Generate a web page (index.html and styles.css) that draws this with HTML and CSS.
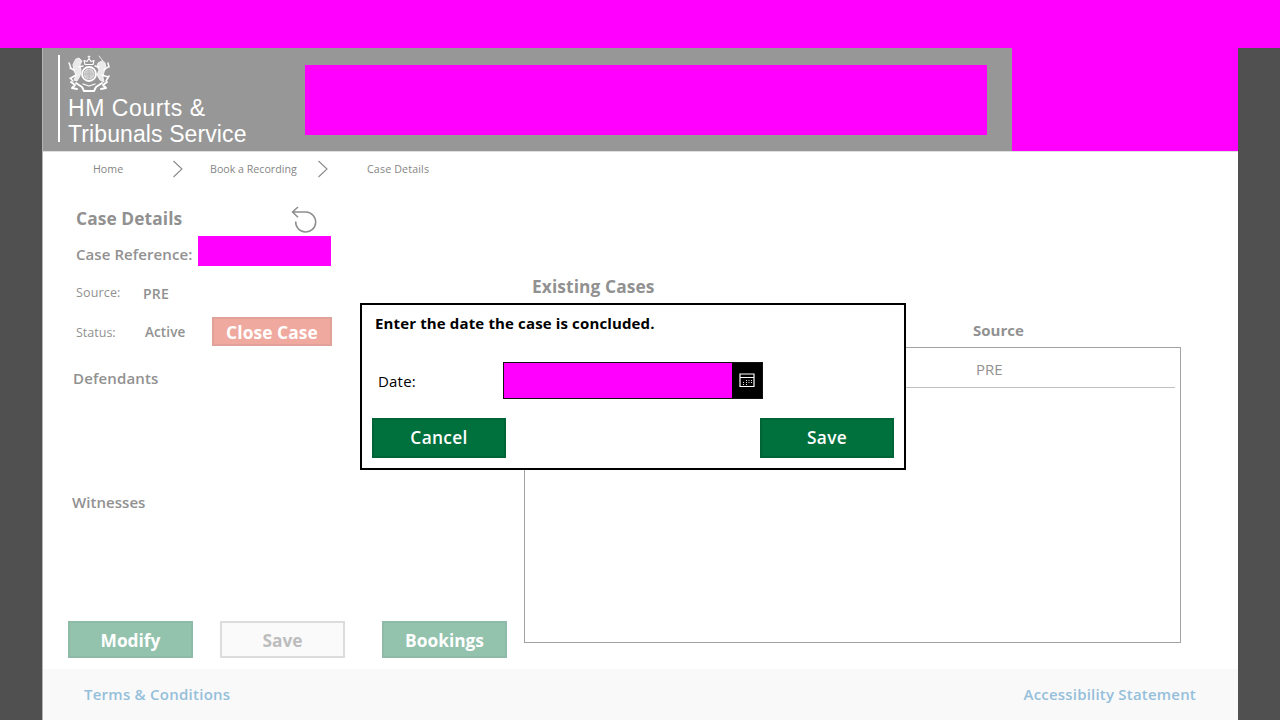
FILE: index.html
```
<!DOCTYPE html>
<html lang="en">
<head>
<meta charset="utf-8">
<title>Case Details</title>
<link rel="stylesheet" href="styles.css">
</head>
<body>
<div class="topbar"></div>
<div class="app">
  <header class="header">
    <div class="brand">
      <svg class="crest" width="44" height="38" viewBox="0 0 44 38" fill="none" stroke="#fff" stroke-linecap="round" stroke-linejoin="round">
        <path d="M17 9.500l-1-4 3 1 2-3 2 3 3-1-1 4zM21 1v2M20 1.800h2" stroke-width="1.100"/>
        <circle cx="21" cy="19" r="7" stroke-width="1.800"/>
        <circle cx="21" cy="19" r="5" fill="#fff" fill-opacity=".5" stroke-width=".6"/>
        <path d="M21 14v10M16 19h10" stroke="#b5b5b5" stroke-width=".7"/>
        <path d="M8 4l3-1 3 3-2 4 1 5-1 6-3 5-3-1 2-5-2-4-1-6z" fill="#fff" fill-opacity=".8" stroke-width=".8"/>
        <path d="M6 15l-4-2M8 20l-5 3M1 8l2 5M2 23l3 3M11 12l4-1" stroke-width="1.500"/>
        <path d="M34 6l-4 2-1 4 2 3-2 5 3 5 4 2-1-5 1-5 2-5-1-4zM35 6l-4-5" fill="#fff" fill-opacity=".8" stroke-width=".8"/>
        <path d="M36 15l4-3M34 20l6 2M40 8l1 4M41 21l-3 5M31 12l-4-1" stroke-width="1.500"/>
        <path d="M3 27l4 3-3 3 5 1M8 28l6 4 2 4h10l2-4 6-4M39 27l-4 3 3 3-5 1" stroke-width="1.900"/>
        <path d="M15 29l6 2 6-2" stroke-width="1.300"/>
      </svg>
      <div class="brand-name"><span class="brand-first">HM Courts &amp;</span><br>Tribunals Service</div>
    </div>
    <div class="title-block"></div>
    <div class="user-block"></div>
  </header>

  <nav class="crumbs">
    <span class="crumb home">Home</span>
    <svg class="chevron" width="12" height="18" viewBox="0 0 12 18"><path d="M1.500 1l8.500 8-8.500 8" fill="none" stroke="#8a8a8a" stroke-width="1.100"/></svg>
    <span class="crumb book">Book a Recording</span>
    <svg class="chevron" width="12" height="18" viewBox="0 0 12 18"><path d="M1.500 1l8.500 8-8.500 8" fill="none" stroke="#8a8a8a" stroke-width="1.100"/></svg>
    <span class="crumb details">Case Details</span>
  </nav>

  <main class="content">
    <section class="case">
      <div class="case-head">
        <h1 class="heading">Case Details</h1>
        <svg class="undo" width="26" height="28" viewBox="0 0 26 28" fill="none" stroke="#8d8d8d" stroke-width="1.500"><path d="M7 1L1.500 6 7 11.200M1.500 6H15a10 10 0 1 1-10.300 9.500"/></svg>
      </div>
      <div class="case-ref"><span class="ref-label">Case Reference:</span><span class="ref-value"></span></div>
      <div class="field source"><span class="label source-label">Source:</span><span class="value pre">PRE</span></div>
      <div class="field status"><span class="label">Status:</span><span class="value active">Active</span><button class="btn close-case">Close Case</button></div>
      <h2 class="sub defendants">Defendants</h2>
      <h2 class="sub witnesses">Witnesses</h2>
      <div class="actions">
        <button class="btn faded">Modify</button>
        <button class="btn disabled">Save</button>
        <button class="btn faded">Bookings</button>
      </div>
    </section>
    <section class="existing">
      <h1 class="heading">Existing Cases</h1>
      <div class="col-head">Source</div>
      <div class="list"><div class="list-row">PRE</div></div>
    </section>
  </main>

  <footer class="footer"><a class="terms">Terms &amp; Conditions</a><a class="access">Accessibility Statement</a></footer>
</div>

<div class="modal">
  <div class="modal-title">Enter the date the case is concluded.</div>
  <div class="date-row">
    <span class="date-label">Date:</span>
    <div class="date-input">
      <span class="date-value"></span>
      <span class="date-button"><svg width="16" height="15" viewBox="0 0 16 15" fill="none" stroke="#fff"><path d="M1 1h14v12.500H1zM1 4.500h14" stroke-width="1.200"/><path d="M4 9.500h1M4 11.500h1M7 7.500h1M7 9.500h1M7 11.500h1M9.500 7.500h1M9.500 9.500h1M12 7.500h1M12 9.500h1" stroke-width="1.200" stroke="#ddd"/></svg></span>
    </div>
  </div>
  <div class="modal-actions"><button class="btn solid">Cancel</button><button class="btn solid save">Save</button></div>
</div>
</body>
</html>
```
FILE: styles.css
```
* { box-sizing: border-box; }
body {
  margin: 0;
  width: 1280px;
  height: 720px;
  overflow: hidden;
  background: #505050;
  color: #919191;
  font-family: "Open Sans", sans-serif;
  position: relative;
}
h1, h2 { margin: 0; }
.topbar { height: 48px; background: #f0f; }
.app {
  width: 1196px;
  height: 672px;
  margin: 0 42px;
  background: #fff;
  border-left: 1px solid #b4b4b4;
  display: flex;
  flex-direction: column;
}
.header { height: 103px; display: flex; background: #979797; flex: none; box-shadow: 0 1px 0 #dedede; }
.brand {
  width: 263px;
  margin: 7px 0 9px 14.500px;
  border-left: 2px solid #fff;
  padding-left: 9px;
  height: 87px;
}
.crest { display: block; margin-left: -1px; }
.brand-name {
  font: 23px/26px "Liberation Sans", Arial, sans-serif;
  letter-spacing: 0.1px;
  color: #fff;
  white-space: nowrap;
  margin: 2px 0 0 -0.500px;
}
.brand-first { letter-spacing: 0.55px; }
.title-block { width: 682px; height: 70px; margin: 17px 25px 0 -15.500px; background: #f0f; }
.user-block { flex: 1; background: #f0f; }

.crumbs {
  height: 35px;
  display: flex;
  align-items: center;
  padding-left: 50px;
  font-size: 10.67px;
  color: #858585;
  white-space: nowrap;
  flex: none;
}
.home { width: 79px; }
.book { width: 107px; margin-left: 26px; }
.details { margin-left: 38px; letter-spacing: 0.15px; }
.chevron { flex: none; }

.content { display: flex; height: 483px; flex: none; }
.case { width: 481px; padding-left: 33px; display: flex; flex-direction: column; }
.heading { font-size: 17.33px; line-height: 24px; font-weight: 700; letter-spacing: 0.1px; white-space: nowrap; }
.case-head { display: flex; height: 50px; padding-top: 20px; }
.case-head .heading { width: 214.500px; }
.case-head .undo { flex: none; }
.case-ref { display: flex; height: 30px; line-height: 37px; font-size: 15px; font-weight: 600; letter-spacing: 0.08px; white-space: nowrap; }
.ref-label { width: 122px; }
.ref-value { width: 133px; height: 30px; background: #f0f; }
.field { display: flex; align-items: center; height: 30px; font-size: 13.5px; white-space: nowrap; }
.source { margin-top: 12px; }
.status { margin-top: 8px; }
.label { width: 67px; font-size: 12.5px; }
.status .label, .active { position: relative; top: 1px; }
.source-label { letter-spacing: 0.15px; position: relative; top: -1px; }
.value { font-weight: 600; width: 69px; letter-spacing: 0.1px; }
.pre { font-size: 14px; letter-spacing: 0.2px; }
.active { padding-left: 2px; }
.sub { font-size: 15px; line-height: 20px; font-weight: 600; letter-spacing: 0.14px; }
.defendants { margin: 22px 0 0 -3px; }
.witnesses { margin: 104px 0 0 -4px; letter-spacing: 0.05px; }
.actions { display: flex; gap: 27px; margin: 109px 0 0 -8px; }
.btn {
  font-family: inherit;
  font-size: 17.33px;
  font-weight: 700;
  color: #fff;
  border: 2px solid;
  padding: 0;
  border-radius: 0;
  width: 125px;
  height: 37px;
  line-height: 30px;
  white-space: nowrap;
}
.faded { background: #93c2ad; border-color: #8dbba7; }
.faded:last-child { margin-left: 10px; }
.disabled { background: #fafafa; border-color: #dcdcdc; color: #bdbdbd; }
.close-case { width: 120px; height: 29px; padding-top: 1px; line-height: 24px; letter-spacing: 0.1px; background: #efa99f; border-color: #e2a198; }

.existing { width: 657px; padding-top: 88px; }
.existing .heading { padding-left: 8px; }
.col-head { padding-left: 449px; margin-top: 22px; line-height: 20px; font-size: 15px; font-weight: 700; }
.list { height: 296px; margin-top: 7px; border: 1px solid #a2a2a2; padding-right: 5px; }
.list-row { height: 40px; border-bottom: 1px solid #c0c0c0; line-height: 43px; font-size: 15px; padding-left: 451px; }

.footer {
  flex: 1;
  background: #f9f9f9;
  display: flex;
  justify-content: space-between;
  padding: 0 42px 0 41px;
  font-size: 15px;
  font-weight: 600;
  line-height: 51px;
  color: #95bfdb;
}
.terms { letter-spacing: 0.25px; }
.access { letter-spacing: 0.2px; }

.modal {
  position: absolute;
  left: 360px;
  top: 302.500px;
  width: 546px;
  height: 167px;
  border: 2px solid #000;
  background: #fff;
  color: #000;
  padding: 8px 10px 0;
}
.modal-title { font-size: 15px; line-height: 20px; font-weight: 700; letter-spacing: 0.14px; padding-left: 3px; white-space: nowrap; }
.date-row { display: flex; align-items: center; margin-top: 29px; padding-left: 6px; height: 37px; }
.date-label { width: 125px; font-size: 15px; letter-spacing: 0.2px; line-height: 20px; position: relative; top: 1px; }
.date-input { width: 260px; height: 37px; border: 1px solid #111; display: flex; }
.date-value { width: 228px; background: #f0f; }
.date-button { flex: 1; background: #000; display: flex; align-items: center; justify-content: center; }
.modal-actions { display: flex; justify-content: space-between; margin-top: 19px; }
.solid { width: 134px; height: 40px; padding-bottom: 2px; font-weight: 600; letter-spacing: 0.3px; background: #00703c; border-color: #006436; }
```
